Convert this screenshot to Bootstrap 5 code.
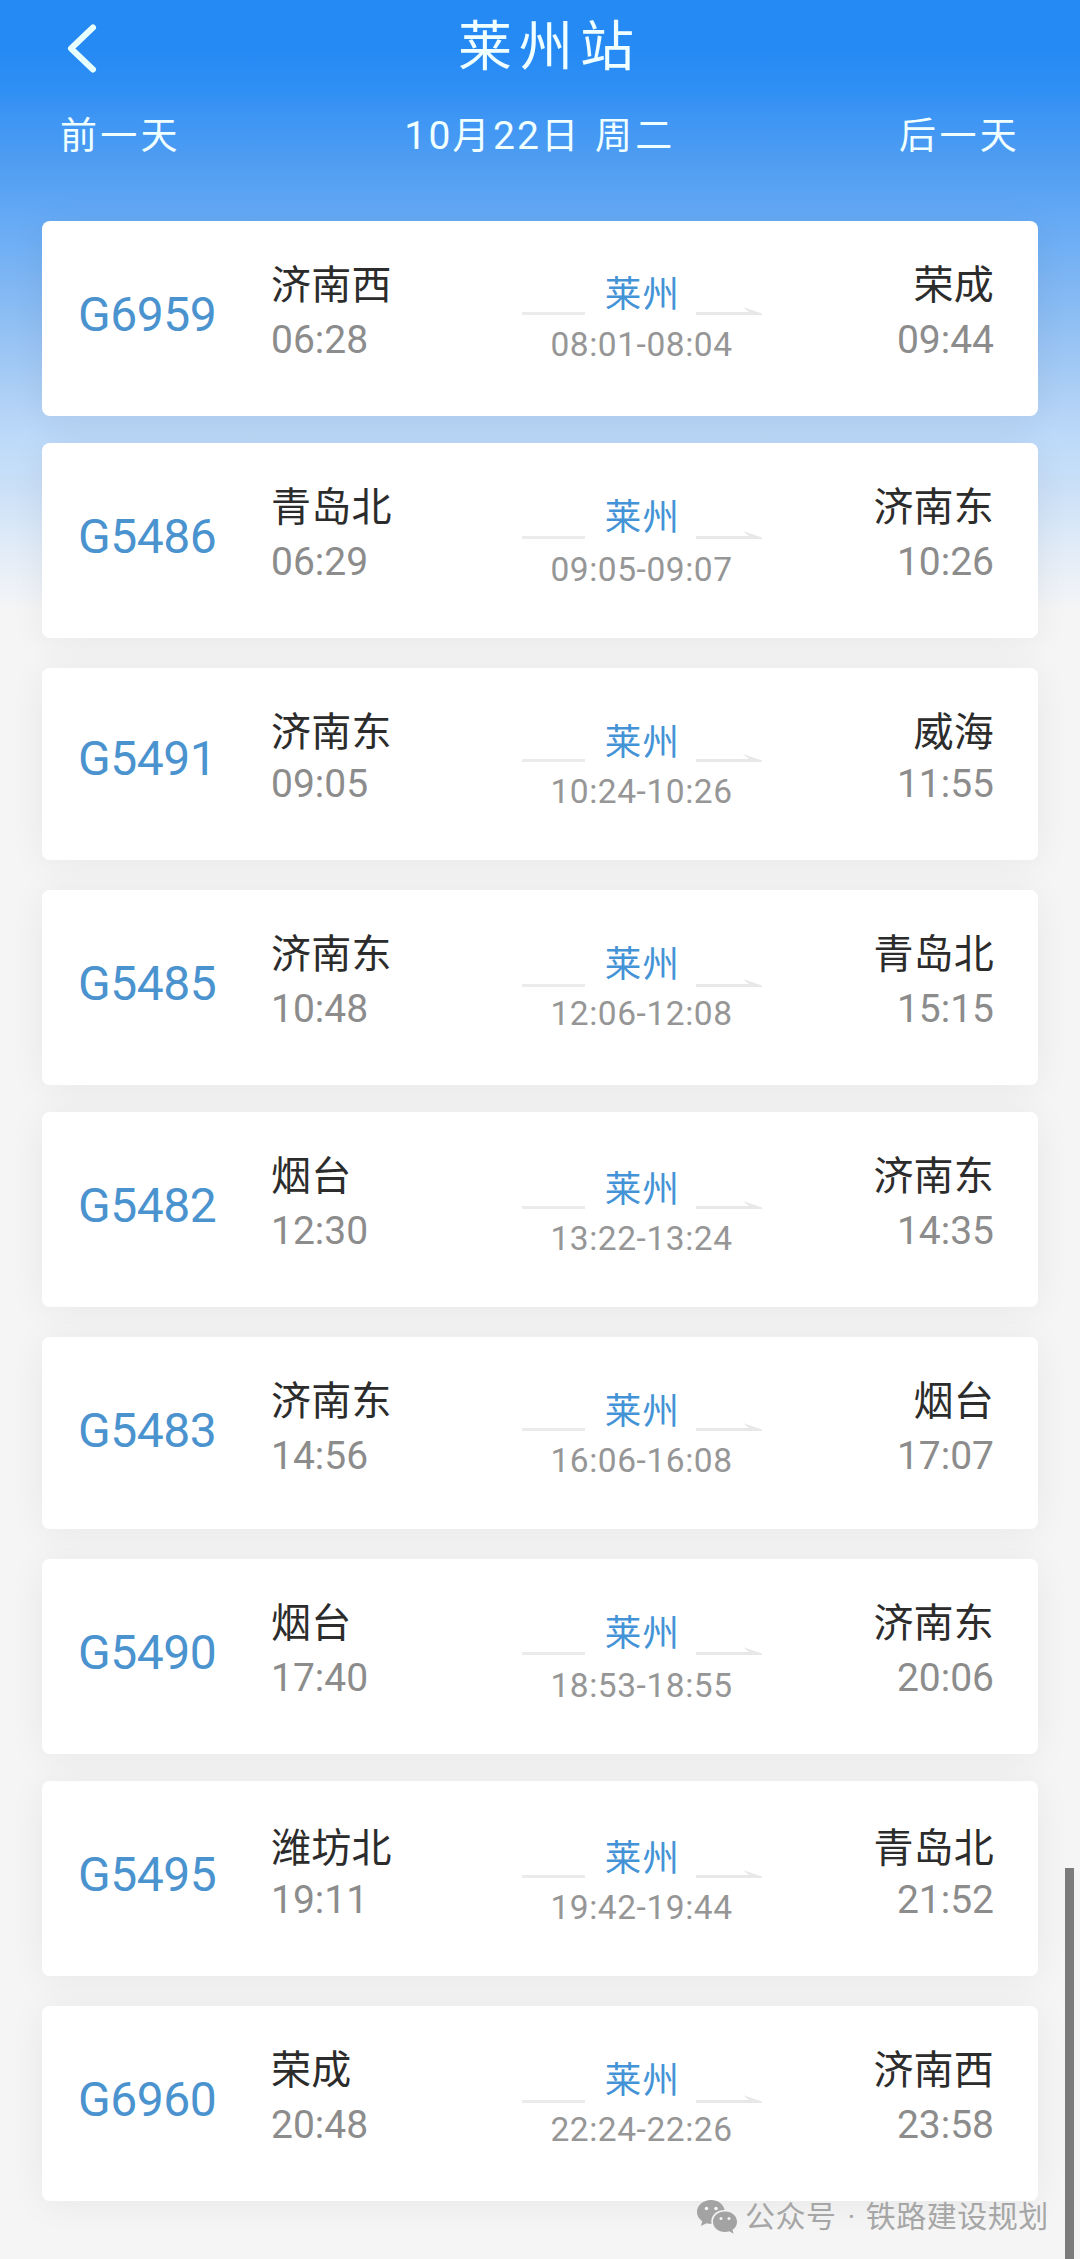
<!DOCTYPE html>
<html lang="zh-CN">
<head>
<meta charset="utf-8">
<meta name="viewport" content="width=device-width, initial-scale=1">
<title>莱州站</title>
<link href="https://cdn.jsdelivr.net/npm/bootstrap@5.3.0/dist/css/bootstrap.min.css" rel="stylesheet">
<style>
  body {
    width: 1080px; height: 2259px; overflow: hidden;
    font-family: "Noto Sans CJK SC", sans-serif;
    background: #f5f5f5 linear-gradient(#268af5 0, #268af5 50px, #2d8ef4 85px, #3f96f4 120px, #509df1 165px, #64a9f5 215px, #8abcf3 310px, #b0d1f6 400px, #bddaf9 440px, #cbe0f7 490px, #e0ebf8 545px, #f5f5f6 610px, #f5f5f5 650px) no-repeat;
  }
  .num { font-family: Roboto, "Noto Sans CJK SC", sans-serif; }
  .page-head { height: 221px; color: #f0ffff; }
  .title-bar { height: 96px; padding: 0 65px; }
  .title-bar svg { width: 34px; height: 54px; margin-top: 21px; }
  .page-title { font-size: 54px; line-height: 54px; letter-spacing: 7px; margin: 16px 0 0 359px; font-weight: 400; }
  .day-bar { font-size: 37px; line-height: 40px; letter-spacing: 3.3px; padding: 17px 60px 0 60px; }
  .day-bar .num { font-size: 39px; letter-spacing: 2.2px; }
  .week { margin-left: 2px; }
  .train-list { padding: 0 42px; gap: 30px; isolation: isolate; }

  .train { height: 195px; padding: 0 44px 0 36px; border-radius: 8px; background: #fff; position: relative; --g: 0px; --st: 0px; --tm: 0px; --via: 0px; --rule: 0px; --vt: 0px; }
  .train::before { content: ""; position: absolute; inset: 0; border-radius: 8px; box-shadow: 0 3px 36px rgba(0,0,0,.06); z-index: -1; }
  .train:nth-child(3n+1):not(:last-child) { margin-bottom: -3px; }
  .train:nth-child(3), .train:nth-child(6) { height: 192px; }
  .train:nth-child(2) { --rule: 2px; --vt: 3px; --via: 1px; }
  .train:nth-child(3) { --g: -3px; --tm: -3px; --via: 1px; }
  .train:nth-child(4) { --via: 1px; --rule: 3px; }
  .train:nth-child(5) { --via: 4px; --rule: 3px; --vt: 3px; }
  .train:nth-child(6) { --via: 1px; }
  .train:nth-child(7) { --via: 1px; --rule: 2px; --vt: 3px; }
  .train:nth-child(8) { --st: 3px; --via: 4px; --rule: 3px; --vt: 3px; }
  .train:nth-child(9) { --via: 1px; --rule: 3px; }

  .train-no { width: 193px; font-size: 48px; line-height: 48px; letter-spacing: -.5px; color: #4a93cf; margin-top: calc(70px + var(--g)); }
  .from { width: 251px; }
  .stop-name { font-size: 40px; line-height: 40px; letter-spacing: .2px; color: #2c2c2c; margin-top: calc(41px + var(--st)); }
  .stop-time { font-size: 39px; line-height: 40px; color: #8c8c8c; margin-top: calc(18px + var(--tm) - var(--st)); }
  .via { width: 240px; }
  .via-mid { width: 0; position: relative; left: 1px; }
  .via-name { font-size: 36.5px; line-height: 36px; letter-spacing: 1.3px; padding-left: 2px; color: #4493d6; margin-top: calc(53px + var(--via)); }
  .via-time { font-size: 33.5px; line-height: 34px; color: #969696; letter-spacing: .55px; margin-top: calc(18px + var(--vt) - var(--via)); white-space: nowrap; }
  .rule { height: 3px; width: 63px; background: #ebebeb; margin-top: calc(91px + var(--rule)); }
  .arrow { width: 66px; height: 8px; margin-top: calc(86px + var(--rule)); fill: #e8e8e8; }

  .scroll-thumb { position: absolute; left: 1065px; top: 1868px; width: 9px; height: 391px; background: #7b7b7b; }
  .watermark { position: absolute; left: 696px; top: 2196px; color: #a6a6a6; font-size: 30px; line-height: 36px; letter-spacing: .5px; white-space: pre; }
  .watermark svg { width: 42px; height: 36px; margin: 2px 7px 0 0; }
  .watermark .num { padding: 0 2px 0 3px; }
</style>
</head>
<body class="position-relative">
<svg class="d-none"><symbol id="arrow" viewBox="0 0 66 8"><path d="M0 5H53L47 0L66 6.500V8H0Z"/></symbol></svg>

<header class="page-head">
  <div class="title-bar d-flex align-items-start">
    <svg viewBox="0 0 34 54" fill="none" stroke="#e8ffff" stroke-width="6" stroke-linecap="round" stroke-linejoin="round"><path d="M28 6.500L6 27.500L28 48.500"/></svg>
    <h1 class="page-title">莱州站</h1>
  </div>
  <nav class="day-bar d-flex justify-content-between">
    <span>前一天</span>
    <span><span class="num">10</span>月<span class="num">22</span>日 <span class="week">周二</span></span>
    <span>后一天</span>
  </nav>
</header>

<main class="train-list d-flex flex-column">
  <article class="train d-flex">
    <div class="train-no num">G6959</div>
    <div class="from"><div class="stop-name">济南西</div><div class="stop-time num">06:28</div></div>
    <div class="via d-flex justify-content-between"><i class="rule"></i><div class="via-mid d-flex flex-column align-items-center"><div class="via-name text-nowrap">莱州</div><div class="via-time num">08:01-08:04</div></div><svg class="arrow"><use href="#arrow"/></svg></div>
    <div class="ms-auto text-end"><div class="stop-name">荣成</div><div class="stop-time num">09:44</div></div>
  </article>
  <article class="train d-flex">
    <div class="train-no num">G5486</div>
    <div class="from"><div class="stop-name">青岛北</div><div class="stop-time num">06:29</div></div>
    <div class="via d-flex justify-content-between"><i class="rule"></i><div class="via-mid d-flex flex-column align-items-center"><div class="via-name text-nowrap">莱州</div><div class="via-time num">09:05-09:07</div></div><svg class="arrow"><use href="#arrow"/></svg></div>
    <div class="ms-auto text-end"><div class="stop-name">济南东</div><div class="stop-time num">10:26</div></div>
  </article>
  <article class="train d-flex">
    <div class="train-no num">G5491</div>
    <div class="from"><div class="stop-name">济南东</div><div class="stop-time num">09:05</div></div>
    <div class="via d-flex justify-content-between"><i class="rule"></i><div class="via-mid d-flex flex-column align-items-center"><div class="via-name text-nowrap">莱州</div><div class="via-time num">10:24-10:26</div></div><svg class="arrow"><use href="#arrow"/></svg></div>
    <div class="ms-auto text-end"><div class="stop-name">威海</div><div class="stop-time num">11:55</div></div>
  </article>
  <article class="train d-flex">
    <div class="train-no num">G5485</div>
    <div class="from"><div class="stop-name">济南东</div><div class="stop-time num">10:48</div></div>
    <div class="via d-flex justify-content-between"><i class="rule"></i><div class="via-mid d-flex flex-column align-items-center"><div class="via-name text-nowrap">莱州</div><div class="via-time num">12:06-12:08</div></div><svg class="arrow"><use href="#arrow"/></svg></div>
    <div class="ms-auto text-end"><div class="stop-name">青岛北</div><div class="stop-time num">15:15</div></div>
  </article>
  <article class="train d-flex">
    <div class="train-no num">G5482</div>
    <div class="from"><div class="stop-name">烟台</div><div class="stop-time num">12:30</div></div>
    <div class="via d-flex justify-content-between"><i class="rule"></i><div class="via-mid d-flex flex-column align-items-center"><div class="via-name text-nowrap">莱州</div><div class="via-time num">13:22-13:24</div></div><svg class="arrow"><use href="#arrow"/></svg></div>
    <div class="ms-auto text-end"><div class="stop-name">济南东</div><div class="stop-time num">14:35</div></div>
  </article>
  <article class="train d-flex">
    <div class="train-no num">G5483</div>
    <div class="from"><div class="stop-name">济南东</div><div class="stop-time num">14:56</div></div>
    <div class="via d-flex justify-content-between"><i class="rule"></i><div class="via-mid d-flex flex-column align-items-center"><div class="via-name text-nowrap">莱州</div><div class="via-time num">16:06-16:08</div></div><svg class="arrow"><use href="#arrow"/></svg></div>
    <div class="ms-auto text-end"><div class="stop-name">烟台</div><div class="stop-time num">17:07</div></div>
  </article>
  <article class="train d-flex">
    <div class="train-no num">G5490</div>
    <div class="from"><div class="stop-name">烟台</div><div class="stop-time num">17:40</div></div>
    <div class="via d-flex justify-content-between"><i class="rule"></i><div class="via-mid d-flex flex-column align-items-center"><div class="via-name text-nowrap">莱州</div><div class="via-time num">18:53-18:55</div></div><svg class="arrow"><use href="#arrow"/></svg></div>
    <div class="ms-auto text-end"><div class="stop-name">济南东</div><div class="stop-time num">20:06</div></div>
  </article>
  <article class="train d-flex">
    <div class="train-no num">G5495</div>
    <div class="from"><div class="stop-name">潍坊北</div><div class="stop-time num">19:11</div></div>
    <div class="via d-flex justify-content-between"><i class="rule"></i><div class="via-mid d-flex flex-column align-items-center"><div class="via-name text-nowrap">莱州</div><div class="via-time num">19:42-19:44</div></div><svg class="arrow"><use href="#arrow"/></svg></div>
    <div class="ms-auto text-end"><div class="stop-name">青岛北</div><div class="stop-time num">21:52</div></div>
  </article>
  <article class="train d-flex">
    <div class="train-no num">G6960</div>
    <div class="from"><div class="stop-name">荣成</div><div class="stop-time num">20:48</div></div>
    <div class="via d-flex justify-content-between"><i class="rule"></i><div class="via-mid d-flex flex-column align-items-center"><div class="via-name text-nowrap">莱州</div><div class="via-time num">22:24-22:26</div></div><svg class="arrow"><use href="#arrow"/></svg></div>
    <div class="ms-auto text-end"><div class="stop-name">济南西</div><div class="stop-time num">23:58</div></div>
  </article>
</main>

<div class="scroll-thumb"></div>
<div class="watermark d-flex align-items-center">
  <svg viewBox="0 0 42 36"><path fill="#a3a3a3" d="M15 1C7 1 1 6.300 1 13c0 3.800 2 7 5.200 9.200L5 27l5.400-2.800c1.700.4 3.400.6 5.200.5C14 17 20 11 28.600 11 27.500 5 21.800 1 15 1Z"/><path fill="#a3a3a3" d="M29 12.500c-7 0-12 4.700-12 10.200S22 33 29 33c1.500 0 3-.2 4.300-.7l4.300 2.400-1.100-4C39.500 28.800 41 26 41 22.700c0-5.500-5-10.200-12-10.200Z"/><g fill="#f4f4f4"><circle cx="10.500" cy="9.500" r="1.800"/><circle cx="20" cy="9.500" r="1.800"/><circle cx="25" cy="19.500" r="1.500"/><circle cx="33" cy="19.500" r="1.500"/></g></svg><span>公众号<span class="num"> · </span>铁路建设规划</span>
</div>
<script src="https://cdn.jsdelivr.net/npm/bootstrap@5.3.0/dist/js/bootstrap.bundle.min.js"></script>
</body>
</html>
